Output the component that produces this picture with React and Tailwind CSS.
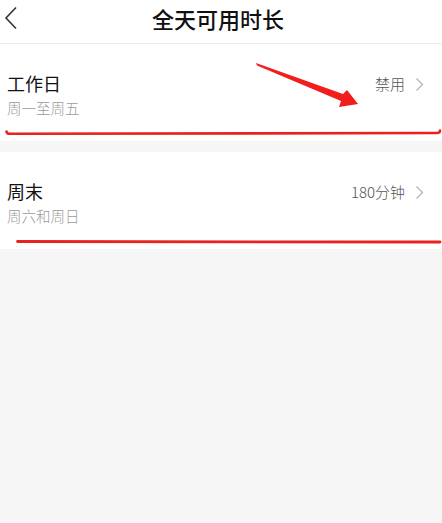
import React from "react";

const font = { fontFamily: '"Noto Sans CJK SC", "Noto Sans", sans-serif' };

function Chevron() {
  return (
    <svg width="9" height="15" viewBox="0 0 9 15" className="ml-[10px]">
      <path d="M1.5 1.5 L7.5 7.5 L1.5 13.5" fill="none" stroke="#b5b5b5" strokeWidth="1.3" />
    </svg>
  );
}

function Row({ title, sub, value }) {
  return (
    <div className="bg-white h-[97px] flex items-center pl-[7px] pr-[18px] pt-[4px]">
      <div className="flex-1 flex flex-col">
        <div className="text-[18px] leading-[24px] text-[#111]">{title}</div>
        <div className="text-[14.5px] leading-[20px] font-light text-[#9a9a9a] mt-[3px]">{sub}</div>
      </div>
      <div className="flex items-center mb-[20px]">
        <span className="text-[15px] font-light text-[#555]">{value}</span>
        <Chevron />
      </div>
    </div>
  );
}

export default function App() {
  return (
    <div className="relative w-[442px] h-[523px] bg-[#f6f6f6] overflow-hidden" style={font}>
      <div className="h-[44px] bg-white border-b border-[#ececec] flex items-center justify-center relative">
        <svg width="14" height="24" viewBox="0 0 14 24" className="absolute left-[4px] top-[6px]">
          <path d="M12 1.5 L2 12 L12 22.5" fill="none" stroke="#333" strokeWidth="1.6" />
        </svg>
        <div className="text-[22px] font-medium text-[#111] leading-none -mt-[7px] -ml-[6px]">全天可用时长</div>
      </div>
      <Row title="工作日" sub="周一至周五" value="禁用" />
      <div className="h-[11px]" />
      <Row title="周末" sub="周六和周日" value="180分钟" />
      <svg className="absolute left-0 top-0 pointer-events-none" width="442" height="523">
        <polygon points="256,63 343,94 347,90 358,104 339,107 341,101 257,65.5" fill="#f21d1d" />
        <path d="M6.5 131.5 Q7 134 10 133.8 L437 133 Q440 133 440 130.5" fill="none" stroke="#e8231f" strokeWidth="2.6" strokeLinecap="round" />
        <path d="M17.5 241.5 L440 242" fill="none" stroke="#e8231f" strokeWidth="2.8" strokeLinecap="round" />
      </svg>
    </div>
  );
}
